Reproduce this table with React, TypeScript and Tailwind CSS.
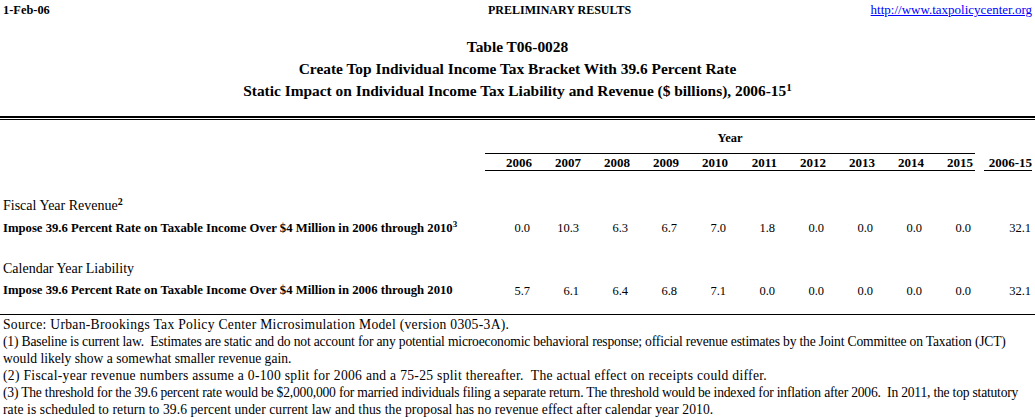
import React from 'react'

const years = ['2006', '2007', '2008', '2009', '2010', '2011', '2012', '2013', '2014', '2015']

const rows = [
  {
    section: 'Fiscal Year Revenue',
    sectionNote: '2',
    label: 'Impose 39.6 Percent Rate on Taxable Income Over $4 Million in 2006 through 2010',
    labelNote: '3',
    values: ['0.0', '10.3', '6.3', '6.7', '7.0', '1.8', '0.0', '0.0', '0.0', '0.0'],
    total: '32.1',
  },
  {
    section: 'Calendar Year Liability',
    sectionNote: '',
    label: 'Impose 39.6 Percent Rate on Taxable Income Over $4 Million in 2006 through 2010',
    labelNote: '',
    values: ['5.7', '6.1', '6.4', '6.8', '7.1', '0.0', '0.0', '0.0', '0.0', '0.0'],
    total: '32.1',
  },
]

// each line of the notes is set with its own tracking so the widths line up
const notes = [
  { text: 'Source: Urban-Brookings Tax Policy Center Microsimulation Model (version 0305-3A).', cls: 'tracking-[0.3px]' },
  { text: '(1) Baseline is current law.\u00a0 Estimates are static and do not account for any potential microeconomic behavioral response; official revenue estimates by the Joint Committee on Taxation (JCT)', cls: 'tracking-[-0.18px]' },
  { text: 'would likely show a somewhat smaller revenue gain.', cls: 'tracking-[0px]' },
  { text: '(2) Fiscal-year revenue numbers assume a 0-100 split for 2006 and a 75-25 split thereafter.\u00a0 The actual effect on receipts could differ.', cls: 'tracking-[0.3px]' },
  { text: '(3) The threshold for the 39.6 percent rate would be $2,000,000 for married individuals filing a separate return. The threshold would be indexed for inflation after 2006.\u00a0 In 2011, the top statutory', cls: 'tracking-[-0.21px]' },
  { text: 'rate is scheduled to return to 39.6 percent under current law and thus the proposal has no revenue effect after calendar year 2010.', cls: 'tracking-[0.07px]' },
]

const grid = 'grid grid-cols-[485px_repeat(10,49px)_1fr]'

export default function App() {
  return (
    <div className="w-[1035px] h-[417px] overflow-hidden bg-white text-black font-['Liberation_Serif','Times_New_Roman',serif]">
      {/* page header */}
      <div className="grid grid-cols-[485px_1fr_auto] items-center h-[20px] px-[3px]">
        <span className="text-[12.4px] font-bold">1-Feb-06</span>
        <span className="text-[12px] font-bold">PRELIMINARY RESULTS</span>
        <span className="text-right text-[13px] text-[#0000ff] underline">http://www.taxpolicycenter.org</span>
      </div>

      {/* titles */}
      <div className="mt-[16px] flex flex-col items-center text-[15.4px] font-bold leading-[22px]">
        <div>Table T06-0028</div>
        <div>Create Top Individual Income Tax Bracket With 39.6 Percent Rate</div>
        <div>
          Static Impact on Individual Income Tax Liability and Revenue ($ billions), 2006-15
          <sup className="text-[11px]">1</sup>
        </div>
      </div>

      {/* double rule */}
      <div className="mt-[14px] border-t-2 border-black" />
      <div className="mt-[1px] border-t border-black" />

      {/* column headings */}
      <div className={`${grid} h-[34px] text-[12.5px] font-bold`}>
        <div />
        <div className="col-span-10 flex items-center justify-center pt-[3px] border-b border-black">Year</div>
        <div />
      </div>
      <div className={`${grid} h-[17px] text-[13px] font-bold`}>
        <div />
        {years.map(y => (
          <div key={y} className="flex items-center justify-end pt-[1px] pr-[2px] border-b border-black leading-none">
            {y}
          </div>
        ))}
        <div className="flex pl-[9px] pr-[3px]">
          <div className="flex-1 flex items-center justify-end pt-[1px] border-b border-black leading-none">2006-15</div>
        </div>
      </div>

      {/* data */}
      {rows.map((r, i) => (
        <div key={r.section} className={i === 0 ? 'mt-[23px]' : 'mt-[16px]'}>
          <div className="h-[22px] flex items-center px-[3px] text-[14px]">
            <span>
              {r.section}
              {r.sectionNote && <sup className="text-[10px] font-bold">{r.sectionNote}</sup>}
            </span>
          </div>
          <div className={`${grid} ${i === 0 ? 'h-[25px]' : 'h-[24px]'} items-center`}>
            <div className="pl-[3px] text-[12.7px] font-bold whitespace-nowrap">
              {r.label}
              {r.labelNote && <sup className="text-[9px]">{r.labelNote}</sup>}
            </div>
            {r.values.map((v, j) => (
              <div key={j} className="text-right pr-[4px] text-[12.5px]">{v}</div>
            ))}
            <div className="text-right pr-[4px] text-[12.5px]">{r.total}</div>
          </div>
        </div>
      ))}

      {/* footnotes */}
      <div className="mt-[11px] border-t border-black" />
      <div className="pt-[1px] px-[3px] text-[13.6px] leading-[17px]">
        {notes.map((n, i) => (
          <div key={i} className={`whitespace-nowrap ${n.cls}`}>{n.text}</div>
        ))}
      </div>
    </div>
  )
}
